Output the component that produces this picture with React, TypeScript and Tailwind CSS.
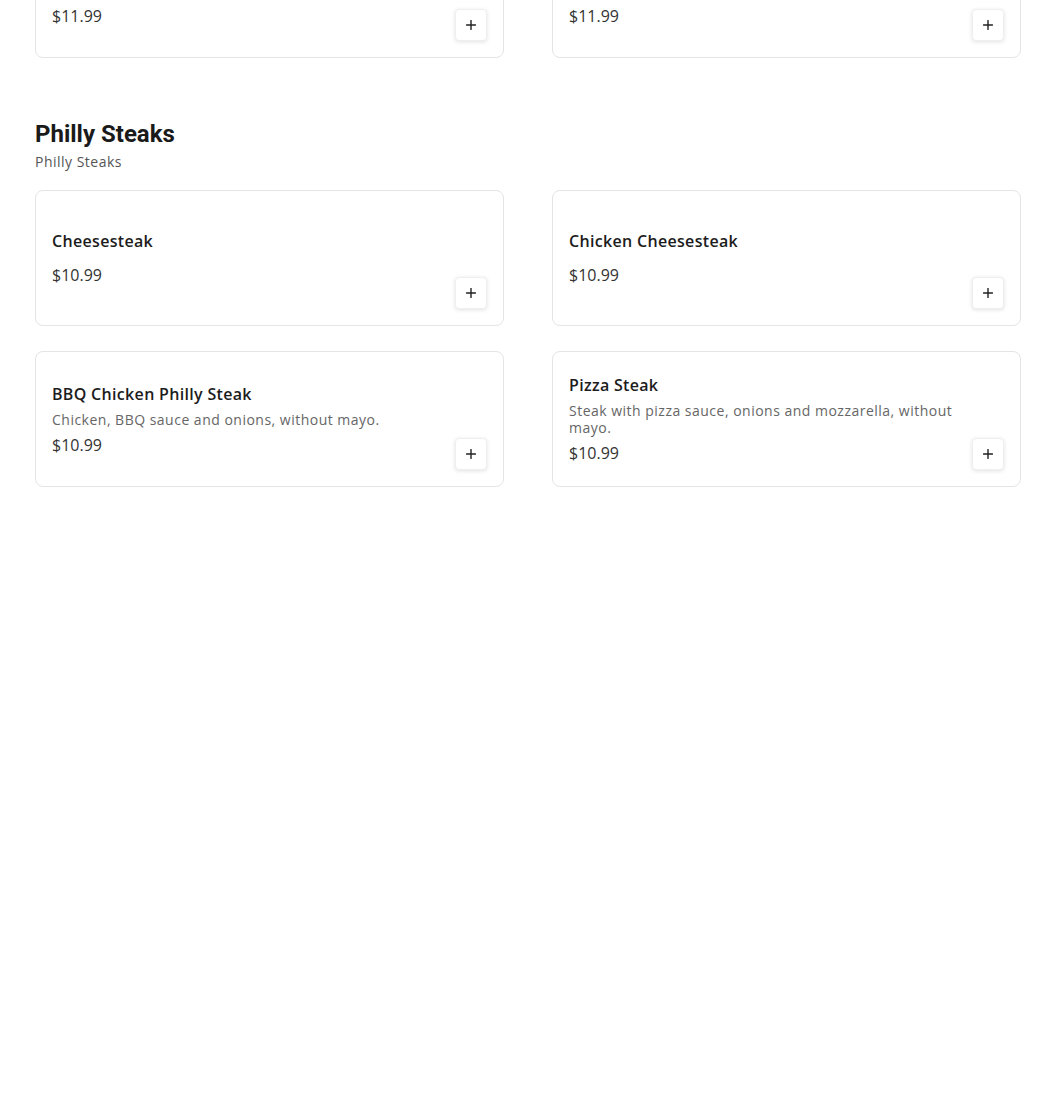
import React from 'react';

type Item = {
  name: string;
  description?: string;
  price: string;
};

const previousItems: Item[] = [
  {
    name: 'Chicken Sub',
    description: 'Grilled chicken with lettuce, tomatoes, onions and mayo on a toasted roll.',
    price: '$11.99',
  },
  {
    name: 'Italian Sub',
    description: 'Ham, salami, pepperoni with lettuce, tomatoes, onions and dressing.',
    price: '$11.99',
  },
];

const phillyItems: Item[] = [
  { name: 'Cheesesteak', price: '$10.99' },
  { name: 'Chicken Cheesesteak', price: '$10.99' },
  {
    name: 'BBQ Chicken Philly Steak',
    description: 'Chicken, BBQ sauce and onions, without mayo.',
    price: '$10.99',
  },
  {
    name: 'Pizza Steak',
    description: 'Steak with pizza sauce, onions and mozzarella, without mayo.',
    price: '$10.99',
  },
];

function PlusIcon() {
  return (
    <svg width="10" height="10" viewBox="0 0 10 10" fill="none" aria-hidden="true">
      <path d="M5 0.5v9M0.5 5h9" stroke="#222" strokeWidth="1.4" strokeLinecap="round" />
    </svg>
  );
}

function MenuCard({ item, tall = false }: { item: Item; tall?: boolean }) {
  return (
    <div
      className={`flex gap-3 rounded-lg border border-[#e4e4e4] bg-white p-4 ${
        tall ? 'min-h-[152px]' : 'min-h-[136px]'
      }`}
    >
      <div className="flex flex-1 flex-col justify-center gap-[5px] self-center">
        <h3 className="text-base leading-6 font-semibold tracking-[0.02em] text-[#1c1c1c]">
          {item.name}
        </h3>
        <p className="text-sm leading-[17px] tracking-[0.035em] text-[#666]">{item.description}</p>
        <p className="text-base leading-6 text-[#333]">{item.price}</p>
      </div>
      <button
        type="button"
        className="flex h-8 w-8 shrink-0 items-center justify-center self-end rounded-[4px] border border-[#efefef] bg-white shadow-[0_1px_4px_rgba(0,0,0,0.12)]"
        aria-label={`Add ${item.name}`}
      >
        <PlusIcon />
      </button>
    </div>
  );
}

export default function App() {
  return (
    <div className="min-h-[1095px] overflow-hidden bg-white font-['Open_Sans',sans-serif]">
      <div className="-mt-[94px] ml-[35px] w-[986px]">
        <div className="grid grid-cols-2 gap-x-12">
          {previousItems.map((item) => (
            <MenuCard key={item.name} item={item} tall />
          ))}
        </div>

        <section className="mt-[60px]">
          <h2 className="font-['Roboto',sans-serif] text-2xl leading-8 font-bold text-[#1a1a1a]">
            Philly Steaks
          </h2>
          <p className="mt-[3px] text-sm leading-[17px] tracking-[0.035em] text-[#555]">
            Philly Steaks
          </p>

          <div className="mt-5 grid grid-cols-2 gap-x-12 gap-y-[25px]">
            {phillyItems.map((item) => (
              <MenuCard key={item.name} item={item} />
            ))}
          </div>
        </section>
      </div>
    </div>
  );
}
